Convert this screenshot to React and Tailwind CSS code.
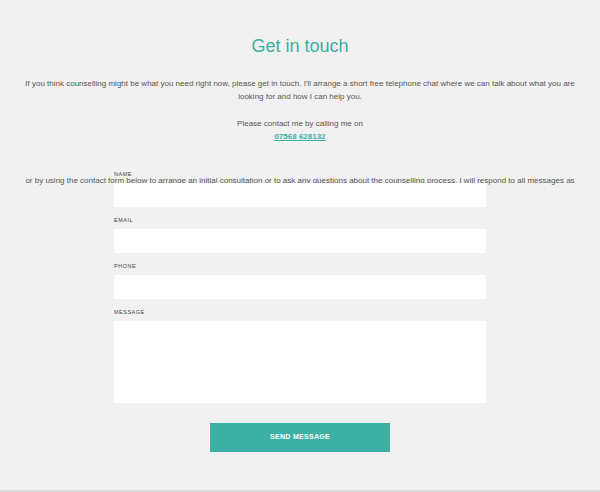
const fields = [
  { label: 'Name', type: 'text' },
  { label: 'Email', type: 'email' },
  { label: 'Phone', type: 'tel' },
];

const App = () => {
  return (
    <div className="w-[600px] h-[492px] bg-[#f1f1f1] overflow-hidden" style={{ fontFamily: '"Liberation Sans", Arial, sans-serif' }}>
      <section className="border-b-2 border-[#d9d9d9] pt-[36px] pb-[38px]">
        <h2 className="text-center text-[18px] leading-[20px] text-[#3aafa5] font-normal">Get in touch</h2>

        <div className="mt-[21px] px-[20px] text-center text-[8px] leading-[13px] text-[#555]">
          <p>
            If you think counselling might be what you need right now, please get in touch. I'll arrange a short free
            telephone chat where we can talk about what you are looking for and how I can help you.
          </p>
          <p className="mt-[14px]">
            Please contact me by calling me on
            <br />
            <a href="tel:07568628132" className="font-bold text-[#3aafa5] underline">07568 628132</a>
          </p>
          <div className="mt-[31px] h-[13px] overflow-hidden">
            <p>
              or by using the contact form below to arrange an initial consultation or to ask any questions about the
              counselling process. I will respond to all messages as soon as possible.
            </p>
          </div>
        </div>

        <form className="relative z-10 -mt-[17px] mx-auto w-[372px]" onSubmit={(e) => e.preventDefault()}>
          {fields.map((f) => (
            <div key={f.label} className="mb-[9px]">
              <label className="block h-[8px] leading-[8px] text-[5.5px] tracking-[0.5px] uppercase text-[#444] mb-[5px]">
                {f.label}
              </label>
              <input type={f.type} className="block w-full h-[24px] bg-white rounded-[2px] outline-none px-2 text-[9px]" />
            </div>
          ))}
          <div>
            <label className="block h-[8px] leading-[8px] text-[5.5px] tracking-[0.5px] uppercase text-[#444] mb-[5px]">
              Message
            </label>
            <textarea className="block w-full h-[82px] bg-white rounded-[2px] outline-none resize-none p-2 text-[9px]" />
          </div>
          <div className="mt-[20px] flex justify-center">
            <button type="submit" className="w-[180px] h-[29px] bg-[#3db0a5] text-white text-[7px] font-bold uppercase tracking-[0.3px]">
              Send message
            </button>
          </div>
        </form>
      </section>
    </div>
  );
};

export default App;
